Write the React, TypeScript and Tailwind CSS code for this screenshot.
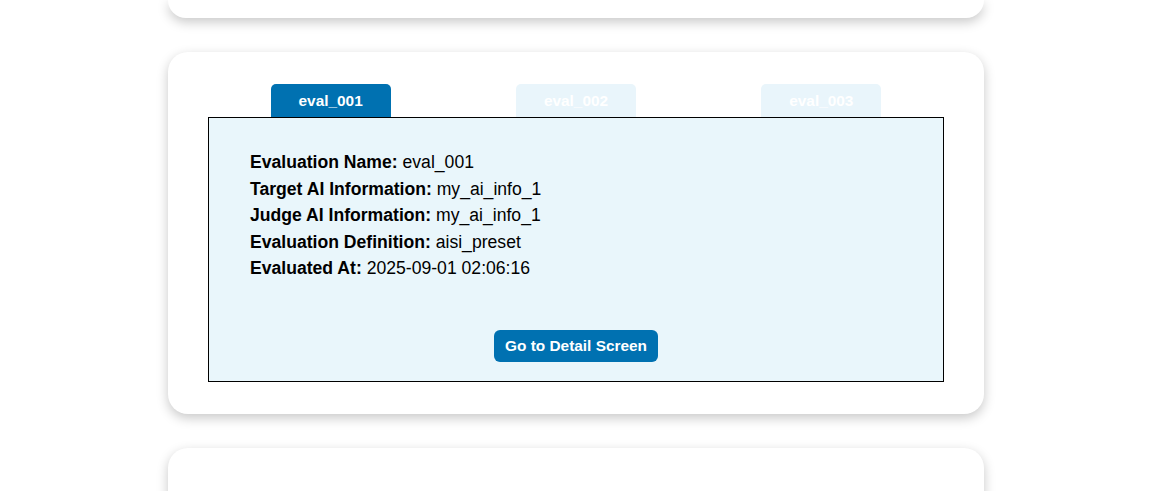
import React from "react";

const rows: [string, string][] = [
  ["Evaluation Name:", "eval_001"],
  ["Target AI Information:", "my_ai_info_1"],
  ["Judge AI Information:", "my_ai_info_1"],
  ["Evaluation Definition:", "aisi_preset"],
  ["Evaluated At:", "2025-09-01 02:06:16"],
];

export default function App() {
  return (
    <div
      className="min-h-screen bg-white flex flex-col items-center gap-[34px] overflow-hidden h-[491px] pr-[9px]"
      style={{ fontFamily: '"Liberation Sans", Arial, sans-serif' }}
    >
      <div className="w-[816px] h-[18px] shrink-0 bg-white rounded-b-[20px] shadow-[0_4px_12px_rgba(0,0,0,0.22)]" />
      <div className="w-[816px] shrink-0 bg-white rounded-[20px] shadow-[0_4px_12px_rgba(0,0,0,0.22)] px-[40px] pt-[32px] pb-[32px]">
        <div className="grid grid-cols-3">
          {["eval_001", "eval_002", "eval_003"].map((t, i) => (
            <div key={t} className="flex justify-center">
              <div
                className={
                  "w-[120px] h-[33px] rounded-t-[5px] flex items-center justify-center text-[15.4px] font-bold text-white " +
                  (i === 0 ? "bg-[#0071b1]" : "bg-[#e9f5fb]")
                }
              >
                {t}
              </div>
            </div>
          ))}
        </div>
        <div className="border border-black bg-[#e9f6fb] px-[41px] pt-[31px] pb-[19px] flex flex-col">
          <div className="text-[17.6px] leading-[26.5px] text-black">
            {rows.map(([k, v]) => (
              <div key={k}>
                <span className="font-bold">{k}</span> {v}
              </div>
            ))}
          </div>
          <div className="flex justify-center mt-[48px]">
            <button className="h-[32px] px-[11px] rounded-[6px] bg-[#0071b1] text-white text-[15.4px] font-bold">
              Go to Detail Screen
            </button>
          </div>
        </div>
      </div>
      <div className="w-[816px] h-[200px] shrink-0 bg-white rounded-[20px] shadow-[0_4px_12px_rgba(0,0,0,0.22)]" />
    </div>
  );
}
